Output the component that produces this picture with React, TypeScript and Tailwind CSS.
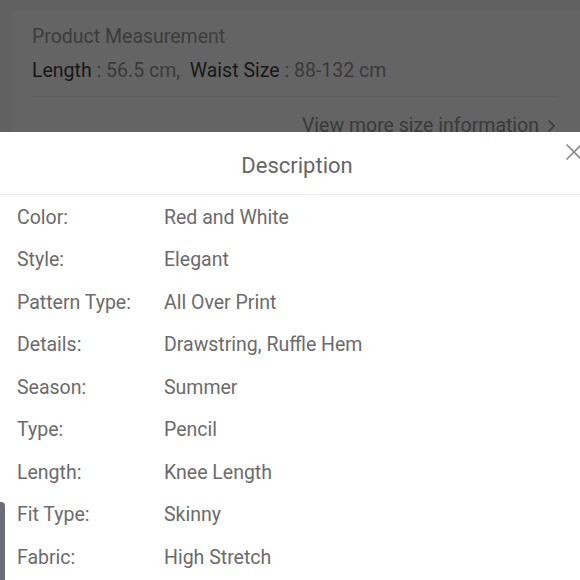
import React from "react";

const rows: [string, string][] = [
  ["Color:", "Red and White"],
  ["Style:", "Elegant"],
  ["Pattern Type:", "All Over Print"],
  ["Details:", "Drawstring, Ruffle Hem"],
  ["Season:", "Summer"],
  ["Type:", "Pencil"],
  ["Length:", "Knee Length"],
  ["Fit Type:", "Skinny"],
  ["Fabric:", "High Stretch"],
];

export default function App() {
  return (
    <div
      className="relative h-[580px] w-[580px] overflow-hidden bg-[#616161]"
      style={{ fontFamily: "Roboto, 'Noto Sans', sans-serif" }}
    >
      {/* dimmed page behind the sheet */}
      <div className="ml-[12px] mt-[10px] h-[140px] bg-[#646464] pl-[20px] pr-[24px]">
        <div className="pt-[15px] text-[19.5px] leading-[24px] text-[#3c3c3c]">Product Measurement</div>
        <div className="mt-[10px] text-[19.5px] leading-[24px] text-[#3a3a3a]">
          <span className="text-[#171717]">Length</span> : 56.5 cm,&nbsp; <span className="text-[#171717]">Waist Size</span> : 88-132 cm
        </div>
        <div className="mt-[13px] border-t border-[#5c5c5c]" />
        <div className="mt-[17px] flex items-center justify-end gap-[8px] text-[19.5px] leading-[24px] text-[#3a3a3a]">
          <span>View more size information</span>
          <svg width="9" height="14" viewBox="0 0 9 14" fill="none">
            <path d="M1.5 1.5 L7 7 L1.5 12.5" stroke="#3a3a3a" strokeWidth="1.6" />
          </svg>
        </div>
      </div>

      {/* bottom sheet */}
      <div className="absolute bottom-0 left-0 top-[132px] w-[580px] bg-white">
        <div className="relative flex h-[63px] items-center justify-center border-b border-[#ececec] pl-[14px] pt-[5px]">
          <span className="text-[22px] text-[#666666]">Description</span>
          <svg className="absolute right-[-3px] top-[11px]" width="18" height="18" viewBox="0 0 18 18" fill="none">
            <path d="M1.5 1.5 L16.5 16.5 M16.5 1.5 L1.5 16.5" stroke="#8a8a8a" strokeWidth="1.6" />
          </svg>
        </div>
        <div className="pt-[1px]">
          {rows.map(([k, v]) => (
            <div key={k} className="flex h-[42.55px] items-center text-[19.5px] text-[#6b6b6b]">
              <span className="w-[164px] pl-[17px]">{k}</span>
              <span>{v}</span>
            </div>
          ))}
        </div>
      </div>

      {/* side tab */}
      <div className="absolute left-0 top-[502px] h-[90px] w-[5px] rounded-tr-[4px] bg-[#6c6c78]" />
    </div>
  );
}
